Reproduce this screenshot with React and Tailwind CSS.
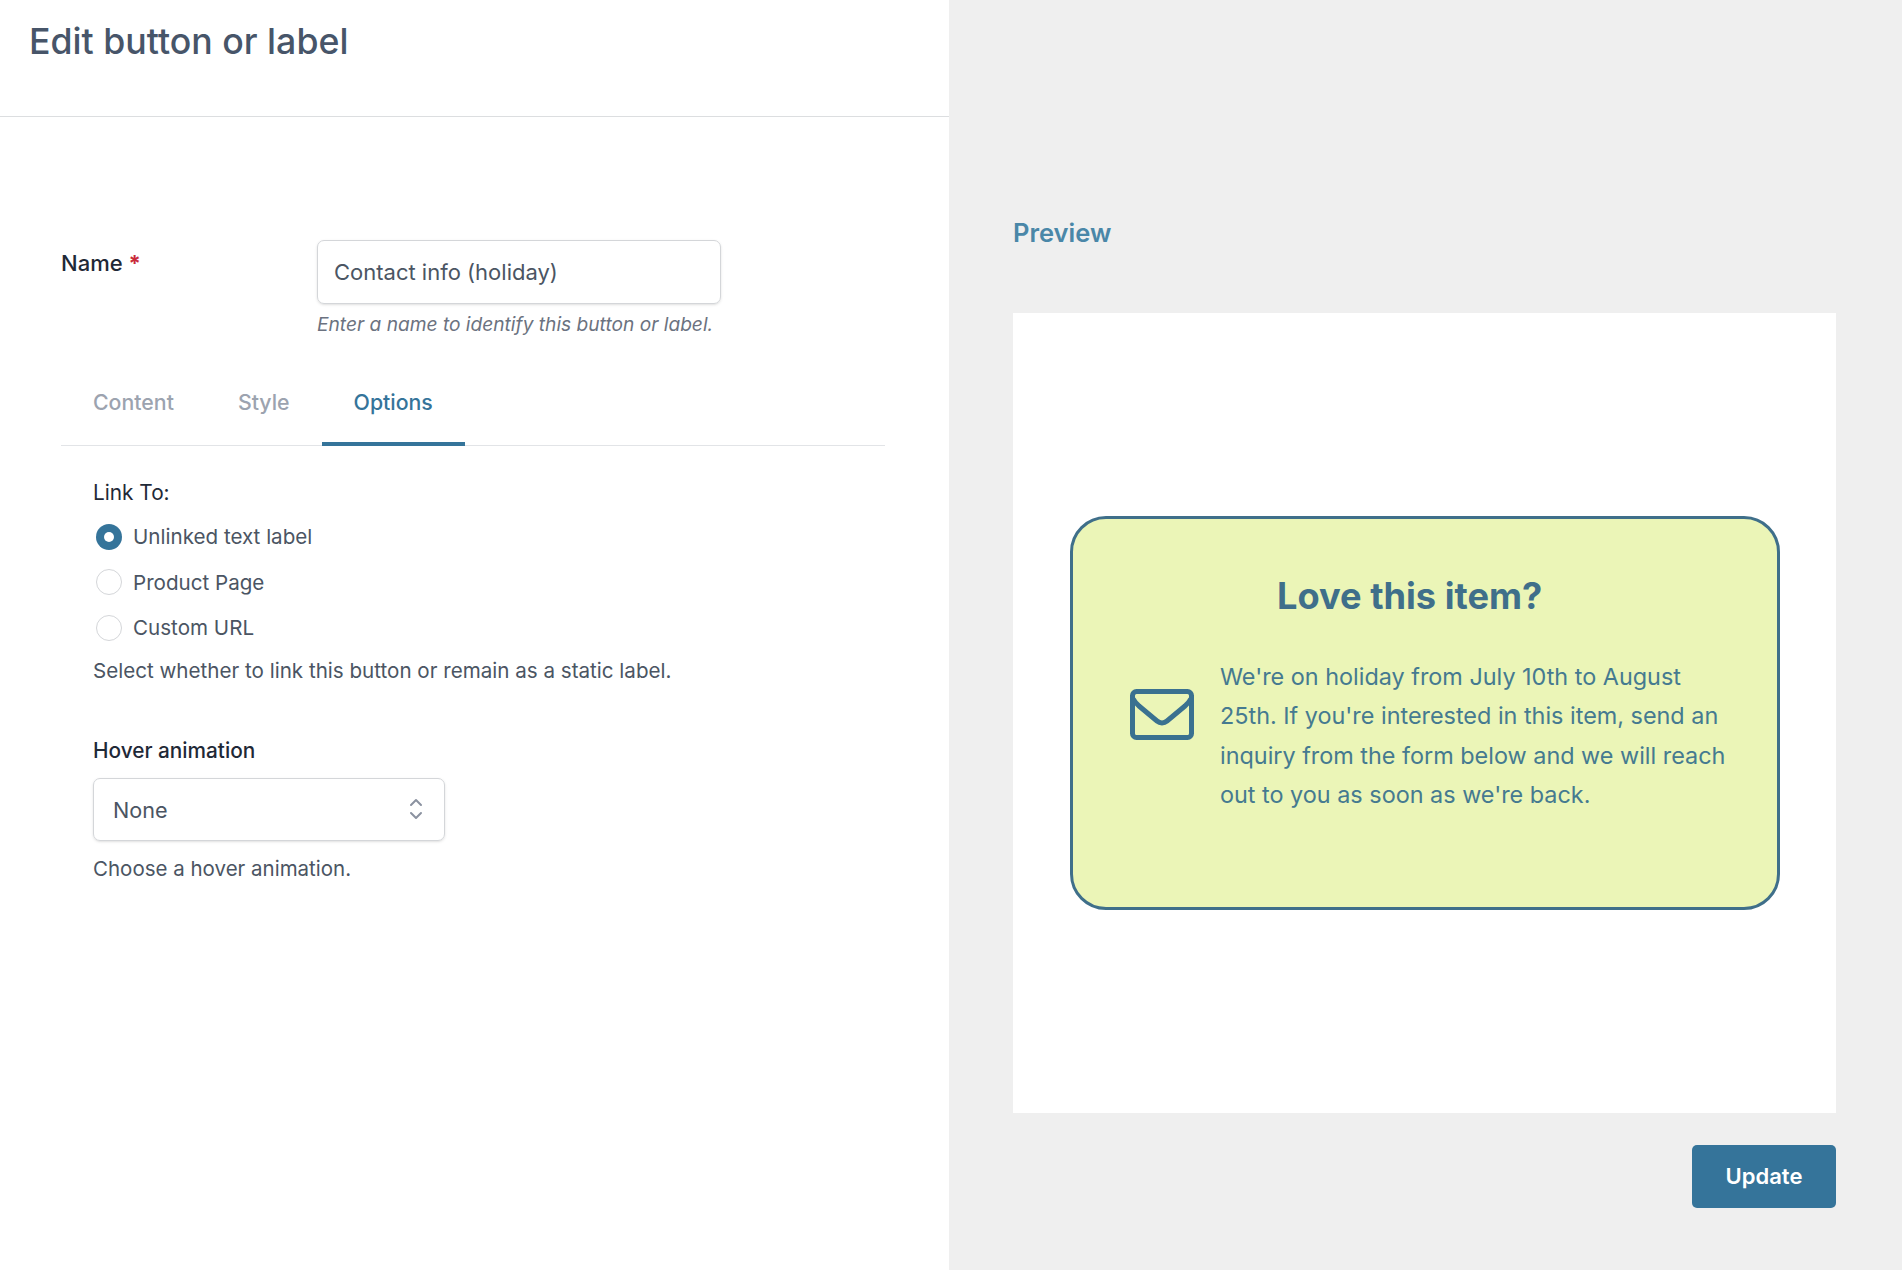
import React from "react";

const RadioRow = ({ label, checked }) => (
  <label className="flex items-center h-[45.5px] pl-[3px]">
    {checked ? (
      <span className="w-[26px] h-[26px] rounded-full bg-[#35749a] flex items-center justify-center">
        <span className="w-[10px] h-[10px] rounded-full bg-white"></span>
      </span>
    ) : (
      <span className="w-[26px] h-[26px] rounded-full border border-[#d4d6d9] bg-white"></span>
    )}
    <span className="ml-[11px] pt-[2px] text-[20.600px] text-[#4b5563]">{label}</span>
  </label>
);

const App = () => {
  return (
    <div className="flex w-full h-[1270px] overflow-hidden font-['Inter',sans-serif]">
      {/* Editor */}
      <div className="w-[949px] bg-white">
        <div className="h-[117px] border-b border-[#dcdee0] pl-[29px] pt-[16px]">
          <h1 className="text-[35.700px] leading-[50px] font-medium text-[#475569]">Edit button or label</h1>
        </div>

        <div className="px-[61px] w-[946px]">
          {/* Name */}
          <div className="flex mt-[123px]">
            <div className="w-[256px] pt-[9px] text-[22px] leading-[28px] font-medium text-[#1f2937]">
              Name <span className="text-[#c92a3a] font-bold">*</span>
            </div>
            <div>
              <input
                type="text"
                defaultValue="Contact info (holiday)"
                className="w-[404px] h-[64px] border border-[#d4d6d9] rounded-[7px] px-[16px] text-[22px] text-[#4b5563] shadow-sm outline-none"
              />
              <p className="mt-[8px] text-[19.150px] leading-[24px] italic text-[#6b7280]">
                Enter a name to identify this button or label.
              </p>
            </div>
          </div>

          {/* Tabs */}
          <div className="flex mt-[30px] h-[80px] border-b border-[#e2e4e7] text-[21.300px] font-medium">
            <div className="px-[32px] pt-[21px] text-[#9ca3af]">Content</div>
            <div className="px-[32px] pt-[21px] text-[#9ca3af]">Style</div>
            <div className="px-[32px] pt-[21px] h-[80px] text-[#35749a] border-b-4 border-[#35749a]">Options</div>
          </div>

          {/* Options */}
          <div className="pl-[32px] pt-[33px]">
            <div className="text-[20.800px] leading-[28px] text-[#1f2937]">Link To:</div>
            <div className="mt-[7px]">
              <RadioRow label="Unlinked text label" checked />
              <RadioRow label="Product Page" />
              <RadioRow label="Custom URL" />
            </div>
            <p className="mt-[6px] text-[20.600px] leading-[28px] text-[#4b5563]">
              Select whether to link this button or remain as a static label.
            </p>

            <div className="mt-[52px] text-[20.800px] leading-[28px] font-medium text-[#1f2937]">Hover animation</div>
            <div className="mt-[13px] w-[352px] h-[63px] border border-[#d4d6d9] rounded-[7px] shadow-sm flex items-center justify-between pl-[19px] pr-[21px]">
              <span className="pt-[2px] text-[21.600px] text-[#4b5563]">None</span>
              <svg width="14" height="22" viewBox="0 0 14 22" fill="none" stroke="#8b92a0" strokeWidth="2" strokeLinecap="round" strokeLinejoin="round">
                <path d="M2 7l5-5 5 5" />
                <path d="M2 15l5 5 5-5" />
              </svg>
            </div>
            <p className="mt-[14px] text-[20.500px] leading-[28px] text-[#4b5563]">Choose a hover animation.</p>
          </div>
        </div>
      </div>

      {/* Preview */}
      <div className="flex-1 bg-[#efefef] pl-[64px] pr-[66px] pt-[216px]">
        <h2 className="text-[25.500px] leading-[34px] font-semibold text-[#4a87a8]">Preview</h2>
        <div className="mt-[63px] h-[800px] bg-white flex items-center justify-center">
          <div className="w-[710px] h-[394px] bg-[#ebf5b7] border-[3.500px] border-[#3f6f8a] rounded-[36px] pt-[53px] pl-[57.500px] pr-[38px] text-[#3f6f8a]">
            <h3 className="pl-[147px] text-[36.200px] leading-[48px] font-bold">Love this item?</h3>
            <div className="flex items-start mt-[37px]">
              <svg width="64" height="51" viewBox="0 0 64 51" fill="none" stroke="#3a7190" strokeWidth="5" className="shrink-0 mt-[32px]" strokeLinecap="round" strokeLinejoin="round">
                <rect x="2.5" y="2.5" width="59" height="46" rx="4" />
                <path d="M4 11c1 2 3 4 5 6l18 15c3 2.500 7 2.500 10 0l18-15c2-2 4-4 5-6" />
              </svg>
              <p className="ml-[26px] text-[23.400px] leading-[39.300px] text-[#457a90]">
                We're on holiday from July 10th to August 25th. If you're interested in this item, send an inquiry from the form below and we will reach out to you as soon as we're back.
              </p>
            </div>
          </div>
        </div>
        <div className="flex justify-end mt-[32px]">
          <button className="w-[144px] h-[63px] rounded-[5px] bg-[#35749a] text-white text-[22px] font-semibold">Update</button>
        </div>
      </div>
    </div>
  );
};

export default App;
